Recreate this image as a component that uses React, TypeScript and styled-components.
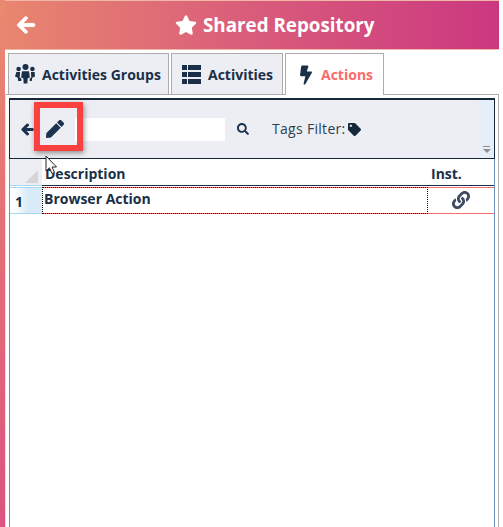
import React from 'react';
import styled, { createGlobalStyle } from 'styled-components';
import { FaArrowLeft, FaBolt, FaLink, FaPen, FaSearch, FaStar, FaTag } from 'react-icons/fa';

const GlobalStyle = createGlobalStyle`
  html, body {
    margin: 0;
    padding: 0;
    background: #ffffff;
  }
  body {
    font-family: "Open Sans", "Liberation Sans", sans-serif;
    color: #1b2f48;
  }
`;

const Page = styled.div`
  position: relative;
  display: flex;
  width: 503px;
  height: 527px;
  overflow: hidden;
  background: #ffffff;
`;

const SideStrip = styled.div`
  width: 5px;
  background: linear-gradient(180deg, #e98a70 0%, #e46f78 45%, #dc5480 100%);
`;

const Main = styled.div`
  display: flex;
  flex-direction: column;
  width: 494px;
`;

const Header = styled.header`
  display: flex;
  align-items: center;
  height: 50px;
  box-sizing: border-box;
  border-top: 1px solid #eeb7a6;
  border-bottom: 1px solid #eeb7a6;
  padding-left: 11px;
  background: linear-gradient(90deg, #e8866f 0%, #d95c7b 50%, #cb3880 100%);
  color: #ffffff;
  margin-bottom: 3px;
`;

const BackIcon = styled(FaArrowLeft)`
  width: 20px;
  height: 20px;
  flex: none;
  stroke: currentColor;
  stroke-width: 24;
`;

const HeaderTitle = styled.h1`
  display: flex;
  align-items: center;
  gap: 6px;
  margin: 0 0 0 139px;
  font-size: 18.8px;
  font-weight: 700;
  line-height: 24px;

  svg {
    width: 22px;
    height: 22px;
  }
`;

const TabBar = styled.nav`
  display: flex;
  align-items: flex-end;
  gap: 2px;
  height: 42px;
  padding-left: 3px;
  margin-bottom: -1px;
  position: relative;
  z-index: 1;
`;

const Tab = styled.div<{ $active?: boolean; $width: number; $pad: number; $gap: number }>`
  display: flex;
  align-items: center;
  gap: ${p => p.$gap}px;
  box-sizing: border-box;
  width: ${p => p.$width}px;
  height: 42px;
  padding-left: ${p => p.$pad}px;
  border: 1px solid #acacac;
  border-bottom: ${p => (p.$active ? 'none' : '1px solid #acacac')};
  background: ${p => (p.$active ? '#ffffff' : '#eceef4')};
  color: ${p => (p.$active ? '#fa6b6b' : '#1b2f48')};
  font-size: 14px;
  font-weight: 700;

  svg {
    flex: none;
    color: #1b2f48;
  }
`;

const BoltIcon = styled(FaBolt)`
  width: 12px;
  height: 20px;
`;

const Panel = styled.section`
  flex: 1;
  box-sizing: border-box;
  display: flex;
  flex-direction: column;
  padding: 3px 3px 0 3px;
  border-top: 1px solid #acacac;
  border-right: 1px solid #acacac;
  border-left: 1px solid #e2e2e2;
`;

const Frame = styled.div`
  flex: 1;
  display: flex;
  flex-direction: column;
  border-left: 1px solid #6d94c4;
  border-right: 1px solid #6d94c4;
`;

const Toolbar = styled.div`
  display: flex;
  align-items: center;
  box-sizing: border-box;
  height: 61px;
  margin-left: -1px;
  margin-right: -1px;
  padding-left: 11px;
  border: 1px solid #16293a;
  border-top: 2px solid #16293a;
  background: #eceef4;
  position: relative;
`;

const ToolIcon = styled.span<{ $gap: number }>`
  display: flex;
  margin-right: ${p => p.$gap}px;
  color: #1b3350;
`;

const BoldArrow = styled(FaArrowLeft)`
  stroke: currentColor;
  stroke-width: 40;
`;

const SearchInput = styled.div`
  width: 150px;
  height: 23px;
  background: #ffffff;
  margin-right: 12px;
`;

const TagsLabel = styled.span`
  display: flex;
  align-items: center;
  gap: 2px;
  margin-left: 23px;
  font-size: 14px;
  color: #2c3e50;
  letter-spacing: 0.3px;
  line-height: 20px;
`;

const Overflow = styled.div`
  position: absolute;
  top: 0;
  right: 0;
  bottom: 0;
  width: 15px;
  background: #e6eefa;
  display: flex;
  flex-direction: column;
  justify-content: flex-end;
  align-items: center;
  padding-bottom: 5px;
  box-sizing: border-box;
`;

const OverflowLine = styled.span`
  width: 7px;
  height: 1px;
  background: #8d8d8d;
`;

const OverflowCaret = styled.span`
  margin-top: 2px;
  border-left: 4px solid transparent;
  border-right: 4px solid transparent;
  border-top: 4px solid #8d8d8d;
`;

const HeaderRow = styled.div`
  display: grid;
  grid-template-columns: 32px 1fr 66px;
  height: 27px;
  box-sizing: border-box;
  border-bottom: 1px solid #1b2f48;
  font-size: 14px;
  font-weight: 700;
  color: #1b2f48;
`;

const Corner = styled.div`
  position: relative;
  background: #eceef4;
  margin-bottom: -1px;
  border-bottom: 1px solid #a8d8f0;
  &::after {
    content: '';
    position: absolute;
    right: 4px;
    bottom: 2px;
    border-left: 13px solid transparent;
    border-bottom: 13px solid #d6d6d6;
  }
`;

const HeaderCell = styled.div`
  display: flex;
  align-items: flex-end;
  padding-left: 3px;
  line-height: 20px;
  padding-bottom: 1px;
`;

const DataRow = styled.div`
  display: grid;
  grid-template-columns: 32px 1fr 66px;
  height: 27px;
  margin-top: 1px;
  box-sizing: border-box;
  border-top: 1px solid #fa6b6b;
  border-bottom: 1px solid #fa6b6b;
  font-size: 14px;
  font-weight: 700;
  color: #1b2f48;
`;

const RowHeader = styled.div`
  background: linear-gradient(90deg, #ffffff 0 12%, #d9ebf6 55%);
  margin: -1px 0;
  border-top: 1px solid #a8d8f0;
  border-bottom: 1px solid #a8d8f0;
  padding: 3px 0 0 5px;
  font-size: 14px;
  line-height: 22px;
`;

const DescriptionCell = styled.div`
  margin: -1px 0;
  border: 1px dotted #111111;
  padding-left: 1px;
  line-height: 21px;
`;

const LinkCell = styled.div`
  display: flex;
  justify-content: center;
  padding-top: 3px;
  color: #3d4c63;

  svg {
    width: 18px;
    height: 18px;
  }
`;

const Highlight = styled.div`
  position: absolute;
  left: 34px;
  top: 102px;
  width: 49px;
  height: 49px;
  box-sizing: border-box;
  border: 6px solid #fb4040;
  box-shadow: 1px 2px 5px rgba(60, 60, 60, 0.55);
`;

const Cursor = styled.svg`
  position: absolute;
  left: 45px;
  top: 155px;
`;

const UsersGlyph = () => (
  <svg width="21" height="20" viewBox="0 0 21 20" fill="currentColor">
    <circle cx="10.5" cy="3" r="3" />
    <circle cx="3.6" cy="5" r="2.3" />
    <circle cx="17.4" cy="5" r="2.3" />
    <path d="M7 7.2h7l.9 6.3-2.2.8-.4 5.2H8.7l-.4-5.2-2.2-.8z" />
    <path d="M1.4 8h3.7l-.4 5.6 1.6 1V17H3.2l-.4-3.2L0 12.4z" />
    <path d="M19.6 8h-3.7l.4 5.6-1.6 1V17h2.1l.4-3.2 2.8-1.4z" />
  </svg>
);

const GridGlyph = () => (
  <svg width="19" height="19" viewBox="0 0 19 19" fill="currentColor">
    <rect x="0" y="0" width="5" height="5" />
    <rect x="6" y="0" width="13" height="5" />
    <rect x="0" y="7" width="5" height="5" />
    <rect x="6" y="7" width="13" height="5" />
    <rect x="0" y="14" width="5" height="5" />
    <rect x="6" y="14" width="13" height="5" />
  </svg>
);

const App = () => (
  <Page>
    <GlobalStyle />
    <SideStrip />
    <Main>
      <Header>
        <BackIcon />
        <HeaderTitle>
          <FaStar />
          Shared Repository
        </HeaderTitle>
      </Header>
      <TabBar>
        <Tab $width={161} $pad={6} $gap={6}>
          <UsersGlyph />
          Activities Groups
        </Tab>
        <Tab $width={112} $pad={10} $gap={7}>
          <GridGlyph />
          Activities
        </Tab>
        <Tab $active $width={99} $pad={14} $gap={9}>
          <BoltIcon />
          Actions
        </Tab>
      </TabBar>
      <Panel>
        <Frame>
          <Toolbar>
            <ToolIcon $gap={12}>
              <BoldArrow size={13} />
            </ToolIcon>
            <ToolIcon $gap={11}>
              <FaPen size={18} />
            </ToolIcon>
            <SearchInput />
            <ToolIcon $gap={0}>
              <FaSearch size={12} />
            </ToolIcon>
            <TagsLabel>
              Tags Filter:
              <FaTag size={13} color="#16293a" />
            </TagsLabel>
            <Overflow>
              <OverflowLine />
              <OverflowCaret />
            </Overflow>
          </Toolbar>
          <HeaderRow>
            <Corner />
            <HeaderCell>Description</HeaderCell>
            <HeaderCell>Inst.</HeaderCell>
          </HeaderRow>
          <DataRow>
            <RowHeader>1</RowHeader>
            <DescriptionCell>Browser Action</DescriptionCell>
            <LinkCell>
              <FaLink />
            </LinkCell>
          </DataRow>
        </Frame>
      </Panel>
    </Main>
    <Highlight />
    <Cursor width="13" height="20" viewBox="0 0 13 20">
      <path d="M1 1 L1 16 L4.5 12.8 L7 18.5 L9.5 17.4 L7 12 L11.5 12 Z" fill="#ffffff" stroke="#222222" strokeWidth="1" />
    </Cursor>
  </Page>
);

export default App;
